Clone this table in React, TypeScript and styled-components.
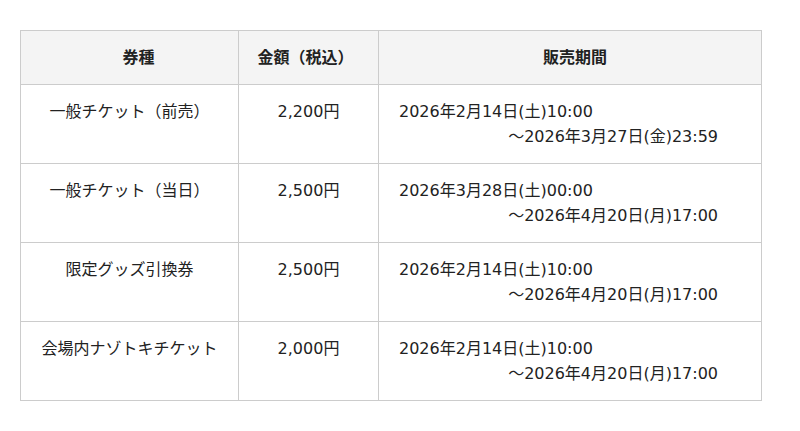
import React from 'react';
import styled, { createGlobalStyle } from 'styled-components';

const GlobalStyle = createGlobalStyle`
  body {
    margin: 0;
    background: #fff;
    font-family: "DejaVu Sans", "Noto Sans CJK JP", sans-serif;
    color: #222;
  }
`;

const Page = styled.div`
  padding: 30px 20px;
`;

const Table = styled.table`
  width: 741px;
  border-collapse: collapse;
  table-layout: fixed;
  font-size: 16px;
  line-height: 25px;
`;

const HeadCell = styled.th<{ $shift?: number }>`
  background: #f4f4f4;
  border: 1px solid #ccc;
  font-weight: bold;
  text-align: center;
  padding: 14px ${(p) => 20 - (p.$shift ?? 0)}px 14px ${(p) => 20 + (p.$shift ?? 0)}px;
`;

const Cell = styled.td<{ $align?: 'left' | 'center' }>`
  border: 1px solid #ccc;
  padding: 14px 20px;
  vertical-align: top;
  text-align: ${(p) => p.$align ?? 'center'};
`;

const PeriodLine = styled.div<{ $end?: boolean }>`
  text-align: ${(p) => (p.$end ? 'right' : 'left')};
  padding-right: ${(p) => (p.$end ? '23px' : '0')};
`;

const tickets = [
  { name: '一般チケット（前売）', price: '2,200円', start: '2026年2月14日(土)10:00', end: '～2026年3月27日(金)23:59' },
  { name: '一般チケット（当日）', price: '2,500円', start: '2026年3月28日(土)00:00', end: '～2026年4月20日(月)17:00' },
  { name: '限定グッズ引換券', price: '2,500円', start: '2026年2月14日(土)10:00', end: '～2026年4月20日(月)17:00' },
  { name: '会場内ナゾトキチケット', price: '2,000円', start: '2026年2月14日(土)10:00', end: '～2026年4月20日(月)17:00' },
];

const App: React.FC = () => {
  return (
    <Page>
      <GlobalStyle />
      <Table>
        <colgroup>
          <col style={{ width: 218 }} />
          <col style={{ width: 140 }} />
          <col style={{ width: 383 }} />
        </colgroup>
        <thead>
          <tr>
            <HeadCell $shift={9}>券種</HeadCell>
            <HeadCell $shift={-3}>金額（税込）</HeadCell>
            <HeadCell $shift={5}>販売期間</HeadCell>
          </tr>
        </thead>
        <tbody>
          {tickets.map((t) => (
            <tr key={t.name}>
              <Cell>{t.name}</Cell>
              <Cell>{t.price}</Cell>
              <Cell $align="left">
                <PeriodLine>{t.start}</PeriodLine>
                <PeriodLine $end>{t.end}</PeriodLine>
              </Cell>
            </tr>
          ))}
        </tbody>
      </Table>
    </Page>
  );
};

export default App;
